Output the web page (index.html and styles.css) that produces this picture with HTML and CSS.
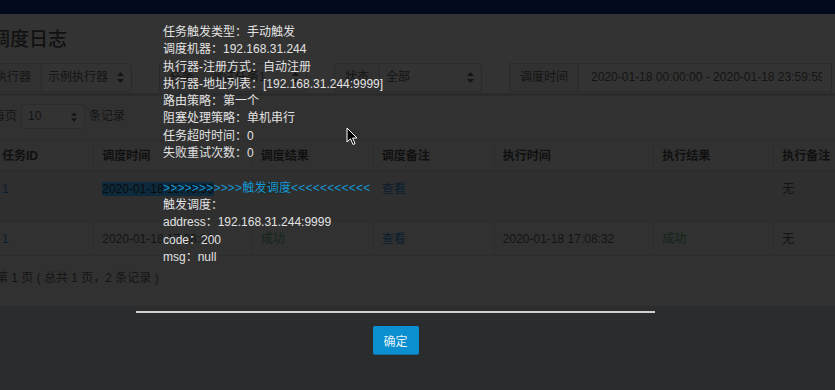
FILE: index.html
```html
<!DOCTYPE html>
<html lang="zh-CN">
<head>
    <meta charset="UTF-8">
    <meta name="viewport" content="width=device-width, initial-scale=1.0">
    <title>调度日志</title>
    <link rel="stylesheet" href="styles.css">
</head>
<body>
    <div class="topbar"></div>

    <div class="content">
        <div class="content-header">
            <h1>调度日志</h1>
        </div>

        <div class="filters">
            <div class="input-group w-148">
                <span class="addon">执行器</span>
                <div class="select">
                    <span>示例执行器</span>
                    <svg class="arrows" width="7" height="11" viewBox="0 0 7 11"><path d="M3.5 0 L7 4 L0 4 Z M3.5 11 L7 7 L0 7 Z" fill="#141414"/></svg>
                </div>
            </div>
            <div class="input-group w-148">
                <span class="addon">任务</span>
                <div class="select">
                    <span>测试任务1</span>
                    <svg class="arrows" width="7" height="11" viewBox="0 0 7 11"><path d="M3.5 0 L7 4 L0 4 Z M3.5 11 L7 7 L0 7 Z" fill="#141414"/></svg>
                </div>
            </div>
            <div class="input-group w-148">
                <span class="addon">状态</span>
                <div class="select">
                    <span>全部</span>
                    <svg class="arrows" width="7" height="11" viewBox="0 0 7 11"><path d="M3.5 0 L7 4 L0 4 Z M3.5 11 L7 7 L0 7 Z" fill="#141414"/></svg>
                </div>
            </div>
            <div class="input-group w-323">
                <span class="addon">调度时间</span>
                <div class="text-input"><span class="clip">2020-01-18 00:00:00 - 2020-01-18 23:59:59</span></div>
            </div>
        </div>

        <div class="box">
            <div class="length-row">
                <span>每页</span>
                <div class="select small">
                    <span>10</span>
                    <svg class="arrows" width="6" height="10" viewBox="0 0 7 11"><path d="M3.5 0 L7 4 L0 4 Z M3.5 11 L7 7 L0 7 Z" fill="#141414"/></svg>
                </div>
                <span>条记录</span>
            </div>

            <table class="log-table">
                <colgroup>
                    <col style="width:101px">
                    <col style="width:159px">
                    <col style="width:122px">
                    <col style="width:122px">
                    <col style="width:160px">
                    <col style="width:121px">
                    <col style="width:90px">
                </colgroup>
                <thead>
                    <tr>
                        <th>任务ID</th>
                        <th>调度时间</th>
                        <th>调度结果</th>
                        <th>调度备注</th>
                        <th>执行时间</th>
                        <th>执行结果</th>
                        <th>执行备注</th>
                    </tr>
                </thead>
                <tbody>
                    <tr class="row-tall">
                        <td><a>1</a></td>
                        <td><span class="picked">2020-01-18 15:49:33</span></td>
                        <td class="ok">成功</td>
                        <td><a>查看</a></td>
                        <td></td>
                        <td></td>
                        <td>无</td>
                    </tr>
                    <tr>
                        <td><a>1</a></td>
                        <td>2020-01-18 17:08:32</td>
                        <td class="ok">成功</td>
                        <td><a>查看</a></td>
                        <td>2020-01-18 17:08:32</td>
                        <td class="ok">成功</td>
                        <td>无</td>
                    </tr>
                </tbody>
            </table>

            <div class="pager-info">第 1 页 ( 总共 1 页，2 条记录 )</div>
        </div>
    </div>

    <!-- trigger log popup -->
    <div class="layer">
        <div class="layer-body">
            任务触发类型：手动触发<br>
            调度机器：192.168.31.244<br>
            执行器-注册方式：自动注册<br>
            执行器-地址列表：[192.168.31.244:9999]<br>
            路由策略：第一个<br>
            阻塞处理策略：单机串行<br>
            任务超时时间：0<br>
            失败重试次数：0<br>
            <br>
            <span class="trigger-title">&gt;&gt;&gt;&gt;&gt;&gt;&gt;&gt;&gt;&gt;&gt;触发调度&lt;&lt;&lt;&lt;&lt;&lt;&lt;&lt;&lt;&lt;&lt;</span><br>
            触发调度：<br>
            address：192.168.31.244:9999<br>
            code：200<br>
            msg：null
        </div>
        <div class="layer-line"></div>
        <div class="layer-btns">
            <button class="btn-ok">确定</button>
        </div>
    </div>

    <svg class="cursor" width="12" height="19" viewBox="0 0 12 19">
        <path d="M1 1 L1 15 L4.5 11.8 L7 17.5 L9 16.6 L6.6 11 L11 11 Z" fill="#000" stroke="#fff" stroke-width="1"/>
    </svg>
</body>
</html>
```

FILE: styles.css
```css
body {
    margin: 0;
    width: 835px;
    height: 390px;
    overflow: hidden;
    position: relative;
    background: #2b2c2e;
    font-family: "Liberation Sans", "Noto Sans CJK SC", sans-serif;
    font-size: 12px;
    line-height: 1.42857;
    color: #141414;
}

.topbar {
    height: 14px;
    background: #000a1c;
}

.content {
    margin-left: -16px;
    width: 880px;
    background: #333333;
}

.content-header {
    height: 49px;
}

.content-header h1 {
    margin: 0;
    padding: 16px 0 0 7px;
    font-size: 19px;
    line-height: 20px;
    font-weight: 500;
    color: #111111;
}

.filters {
    display: flex;
    gap: 27px;
    height: 29px;
    padding-bottom: 1px;
}

.input-group {
    display: flex;
    height: 29px;
}

.w-148 { width: 148px; }
.w-323 { width: 323px; }

.addon {
    display: flex;
    align-items: center;
    padding: 0 10px;
    border: 1px solid #2b2b2b;
    background: #313131;
    white-space: nowrap;
}

.select {
    flex: 1;
    display: flex;
    align-items: center;
    justify-content: space-between;
    padding: 0 7px 0 6px;
    border: 1px solid #2b2b2b;
    border-left: none;
    border-radius: 0 4px 4px 0;
    background: #333333;
}

.select.small {
    flex: none;
    width: 49px;
    height: 23px;
    border-left: 1px solid #2b2b2b;
    border-radius: 4px;
}

.text-input {
    flex: 1;
    display: flex;
    align-items: center;
    padding: 0 9px 0 12px;
    border: 1px solid #2b2b2b;
    border-left: none;
    background: #333333;
    min-width: 0;
}

.text-input .clip {
    flex: 1;
    white-space: nowrap;
    overflow: hidden;
}

.box {
    box-sizing: border-box;
    height: 213px;
    border-top: 3px solid #2a2b2d;
    background: #313131;
    padding: 8px 0 0 9px;
}

.length-row {
    display: flex;
    align-items: center;
    gap: 4px;
    height: 25px;
}

.log-table {
    table-layout: fixed;
    border-collapse: collapse;
    margin-top: 11px;
}

.log-table th,
.log-table td {
    padding: 0 8px;
    text-align: left;
    vertical-align: top;
    border: 1px solid #2d2d2d;
    white-space: nowrap;
    overflow: hidden;
}

.log-table th {
    height: 30px;
    padding-top: 7px;
    box-sizing: border-box;
    font-weight: bold;
    color: #101010;
    border-bottom: 2px solid #2b2b2b;
}

.log-table td {
    padding-top: 9px;
    height: 24px;
}

.log-table tr.row-tall td {
    height: 40px;
    background: #2f2f2f;
}

.log-table a {
    color: #0a1e30;
}

.log-table .ok {
    color: #13261a;
}

.picked {
    background: #0d2a3d;
    color: #0a0a0a;
}

.pager-info {
    margin-top: 14px;
    padding-left: 3px;
}

.layer {
    position: absolute;
    left: 136px;
    top: 24px;
    width: 519px;
}

.layer-body {
    padding: 0 27px;
    line-height: 17.3px;
    color: #e2e2e2;
    white-space: nowrap;
}

.trigger-title {
    color: #1596d4;
    letter-spacing: 0.2px;
}

.layer-line {
    margin-top: 45px;
    height: 2px;
    background: #cfcfcf;
}

.layer-btns {
    display: flex;
    justify-content: center;
    padding-top: 13px;
}

.btn-ok {
    width: 46px;
    height: 29px;
    padding: 0;
    border: none;
    border-bottom: 1px solid #0a6fa3;
    border-radius: 2px;
    background: #0b8fd1;
    color: #e6f3fa;
    font-family: "Liberation Sans", "Noto Sans CJK SC", sans-serif;
    font-size: 12px;
}

.cursor {
    position: absolute;
    left: 346px;
    top: 127px;
}
```
